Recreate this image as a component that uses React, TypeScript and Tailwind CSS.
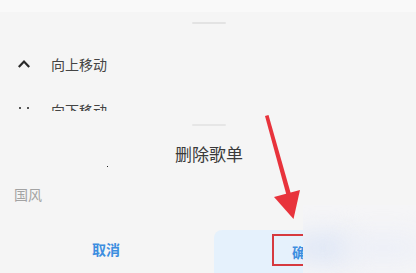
import React from "react";

export default function App() {
  return (
    <div
      className="relative w-[416px] h-[273px] overflow-hidden bg-[#f5f5f5] flex flex-col"
      style={{ fontFamily: '"Noto Sans CJK SC", "Noto Sans", sans-serif' }}
    >
      <div className="h-[12px] bg-[#f9f9f9] shrink-0" />
      <div className="flex justify-center mt-[10px] pl-[1px] shrink-0">
        <div className="w-[34px] h-[2px] bg-[#e3e3e3] rounded-full" />
      </div>

      <div className="flex items-center h-[20px] mt-[30px] shrink-0">
        <svg width="12" height="8" viewBox="0 0 12 8" className="ml-[18px]">
          <polyline points="0.8,7 6,1.6 11.2,7" fill="none" stroke="#2a2a2a" strokeWidth="2.2" strokeLinejoin="miter" />
        </svg>
        <span className="ml-[21px] text-[14px] leading-[20px] text-[#444]">向上移动</span>
      </div>

      <div className="flex items-start h-[11px] mt-[26px] overflow-hidden shrink-0">
        <div className="flex gap-[6px] ml-[19px] mt-[7px]">
          <div className="w-[2px] h-[2px] bg-[#555]" />
          <div className="w-[2px] h-[2px] bg-[#555]" />
        </div>
        <span className="ml-[22px] text-[14px] leading-[20px] text-[#444]">向下移动</span>
      </div>

      <div className="flex flex-col flex-1">
        <div className="flex justify-center mt-[13px] pl-[1px]">
          <div className="w-[34px] h-[2px] bg-[#e6e6e6] rounded-full" />
        </div>
        <div className="flex justify-center mt-[16px] pl-[2px]">
          <span className="text-[17px] leading-[24px] text-[#3a3a3a]">删除歌单</span>
        </div>
        <div className="mt-[15px] pl-[14px]">
          <span className="text-[14px] leading-[20px] text-[#a3a3a3]">国风</span>
        </div>
        <div className="flex mt-[25px] flex-1">
          <div className="w-[214px] flex justify-center pt-[9px]">
            <span className="text-[14px] leading-[20px] font-bold text-[#3d8ee0] pr-[2px]">取消</span>
          </div>
          <div className="flex-1 bg-[#e5f1fc] rounded-tl-[8px] pt-[9px] pl-[78px]">
            <span className="text-[14px] leading-[20px] font-bold text-[#3d8ee0]">确定</span>
          </div>
        </div>
      </div>

      {/* tiny artifact dot */}
      <div className="absolute left-[107px] top-[166px] w-[1px] h-[1px] bg-[#222]" />

      {/* red annotation box */}
      <div className="absolute left-[272px] top-[234px] w-[64px] h-[32px] border-2 border-[#d63a40]" />

      {/* blurred cover block */}
      <div className="absolute left-[303px] top-[205px] w-[113px] h-[68px] overflow-hidden bg-[#f5f5f7]">
        <div className="absolute left-[-10px] top-[28px] w-[60px] h-[30px] rounded-full bg-[#dfe7f6] blur-md" />
        <div className="absolute left-[40px] top-[30px] w-[80px] h-[26px] rounded-full bg-[#eceff7] blur-md" />
      </div>

      {/* red arrow */}
      <svg className="absolute left-0 top-0" width="416" height="273" viewBox="0 0 416 273">
        <polygon points="265,116 268.5,115 291.5,196 287,197" fill="#e8333c" />
        <polygon points="274,197 300,190 293.5,219" fill="#e8333c" />
      </svg>
    </div>
  );
}
